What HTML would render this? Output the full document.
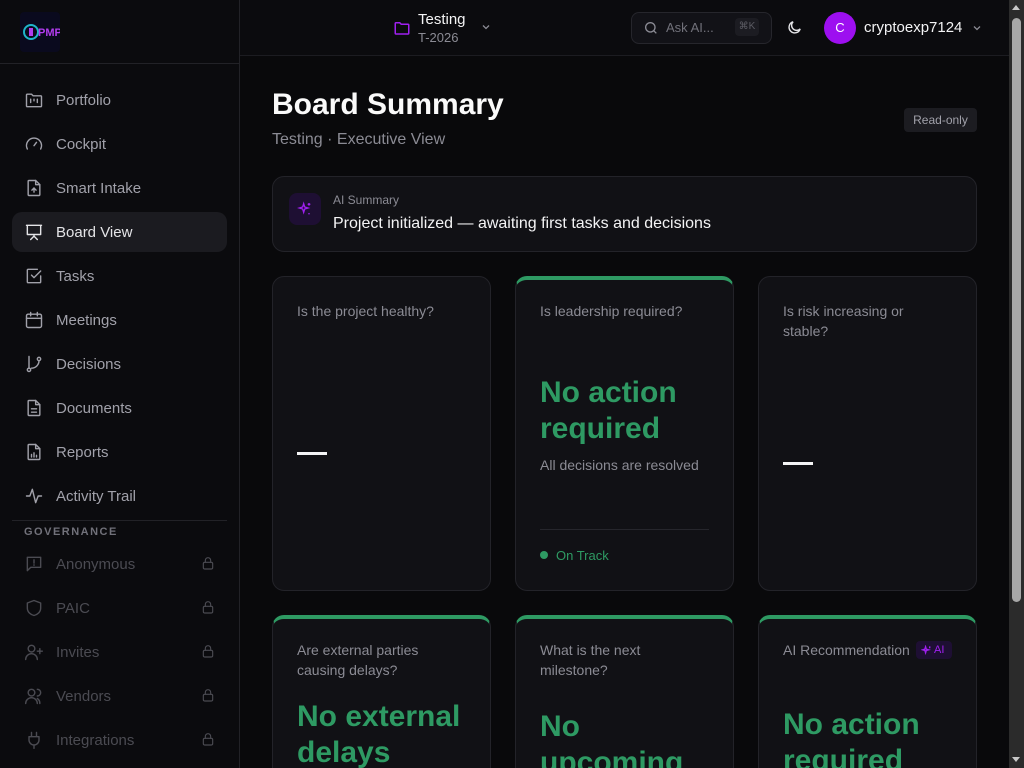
<!DOCTYPE html>
<html><head><meta charset="utf-8"><style>
*{box-sizing:border-box;margin:0;padding:0}
html,body{width:1024px;height:768px;overflow:hidden}
body{background:#09090b;font-family:"Liberation Sans",sans-serif;color:#e4e4e7;position:relative}
.side{position:absolute;left:0;top:0;width:240px;height:768px;background:#0b0b0e;border-right:1px solid #222227}
.logo{position:absolute;left:20px;top:12px;width:40px;height:40px;background:#0a0a1e;border-radius:4px}
.sep{position:absolute;left:0;top:63px;width:240px;height:1px;background:#222227}
.nav{position:absolute;left:12px;width:215px;height:40px;border-radius:10px;display:flex;align-items:center;padding-left:12px;font-size:15px;color:#a1a1aa}
.nav svg{width:20px;height:20px;margin-right:12px;stroke:#a1a1aa;fill:none;stroke-width:1.7;stroke-linecap:round;stroke-linejoin:round}
.nav.act{background:#1b1b20;color:#e4e4e7}
.nav.act svg{stroke:#e4e4e7}
.nav.dis{color:#4b4b52}
.nav.dis svg{stroke:#4b4b52}
.nav svg.lock{position:absolute;right:11px;top:11px;width:16px;height:16px;margin:0}
.gov{position:absolute;left:24px;top:526px;font-size:11px;letter-spacing:1.5px;color:#71717a;font-weight:bold}
.hdr{position:absolute;left:240px;top:0;width:770px;height:56px;border-bottom:1px solid #1c1c21;background:#0b0b0e}
.card{position:absolute;background:#111115;border:1px solid #232329;border-radius:12px;overflow:hidden}
.card.g{border-top:4px solid #2e9a63}
.bot{height:153px;border-bottom:0;border-bottom-left-radius:0;border-bottom-right-radius:0}
.q{position:absolute;left:24px;right:36px;font-size:14px;line-height:20px;color:#8b8b94}
.big{position:absolute;left:24px;right:16px;font-size:30px;line-height:36px;color:#2e9a63;font-weight:bold}
</style></head><body>
<div class="side">
<div class="logo"><svg width="40" height="40"><circle cx="11" cy="20" r="7" fill="none" stroke="#1fb5c9" stroke-width="2"/><rect x="9" y="16" width="4" height="8" fill="#b23cf0"/><text x="18" y="24" font-size="11" font-weight="bold" fill="#b23cf0" font-family="Liberation Sans">PMP</text></svg></div>
<div class="sep"></div>
<div class="nav" style="top:80px"><svg viewBox="0 0 24 24"><path d="M3 6a1 1 0 0 1 1-1h5l2 2h9a1 1 0 0 1 1 1v11a1 1 0 0 1-1 1H4a1 1 0 0 1-1-1z"/><path d="M8 11v4M12 11v2M16 11v4"/></svg>Portfolio</div>
<div class="nav" style="top:124px"><svg viewBox="0 0 24 24"><path d="M4 18a9 9 0 1 1 16 0"/><path d="M12 14l3-4"/></svg>Cockpit</div>
<div class="nav" style="top:168px"><svg viewBox="0 0 24 24"><path d="M14 3H6a1 1 0 0 0-1 1v16a1 1 0 0 0 1 1h12a1 1 0 0 0 1-1V8z"/><path d="M14 3v5h5M12 17v-5M9.5 14.5 12 12l2.5 2.5"/></svg>Smart Intake</div>
<div class="nav act" style="top:212px"><svg viewBox="0 0 24 24"><path d="M3 4h18M4 4v11h16V4M12 15v2M8 21l4-4 4 4"/></svg>Board View</div>
<div class="nav" style="top:256px"><svg viewBox="0 0 24 24"><path d="M20 12v7a1 1 0 0 1-1 1H5a1 1 0 0 1-1-1V5a1 1 0 0 1 1-1h11"/><path d="M9 11l3 3 8-8"/></svg>Tasks</div>
<div class="nav" style="top:300px"><svg viewBox="0 0 24 24"><rect x="3" y="5" width="18" height="16" rx="2"/><path d="M3 10h18M8 3v4M16 3v4"/></svg>Meetings</div>
<div class="nav" style="top:344px"><svg viewBox="0 0 24 24"><circle cx="6" cy="19" r="2"/><circle cx="18" cy="6" r="2"/><path d="M6 3v14M18 8a9 9 0 0 1-9 9"/></svg>Decisions</div>
<div class="nav" style="top:388px"><svg viewBox="0 0 24 24"><path d="M14 3H6a1 1 0 0 0-1 1v16a1 1 0 0 0 1 1h12a1 1 0 0 0 1-1V8z"/><path d="M14 3v5h5M9 13h6M9 17h6"/></svg>Documents</div>
<div class="nav" style="top:432px"><svg viewBox="0 0 24 24"><path d="M14 3H6a1 1 0 0 0-1 1v16a1 1 0 0 0 1 1h12a1 1 0 0 0 1-1V8z"/><path d="M14 3v5h5M9 18v-3M12 18v-5M15 18v-2"/></svg>Reports</div>
<div class="nav" style="top:476px"><svg viewBox="0 0 24 24"><path d="M3 12h4l3-8 4 16 3-8h4"/></svg>Activity Trail</div>
<div style="position:absolute;left:12px;top:520px;width:215px;height:1px;background:#222227"></div>
<div class="gov">GOVERNANCE</div>
<div class="nav dis" style="top:544px"><svg viewBox="0 0 24 24"><path d="M4 4h16v12H8l-4 4z"/><path d="M12 7v4M12 13v.5"/></svg>Anonymous<svg class="lock" viewBox="0 0 24 24"><rect x="5" y="11" width="14" height="10" rx="2"/><path d="M8 11V8a4 4 0 0 1 8 0v3"/></svg></div>
<div class="nav dis" style="top:588px"><svg viewBox="0 0 24 24"><path d="M12 3l8 3v6c0 5-4 8-8 9-4-1-8-4-8-9V6z"/></svg>PAIC<svg class="lock" viewBox="0 0 24 24"><rect x="5" y="11" width="14" height="10" rx="2"/><path d="M8 11V8a4 4 0 0 1 8 0v3"/></svg></div>
<div class="nav dis" style="top:632px"><svg viewBox="0 0 24 24"><circle cx="9" cy="8" r="4"/><path d="M2 21a7 7 0 0 1 14 0M19 8v6M16 11h6"/></svg>Invites<svg class="lock" viewBox="0 0 24 24"><rect x="5" y="11" width="14" height="10" rx="2"/><path d="M8 11V8a4 4 0 0 1 8 0v3"/></svg></div>
<div class="nav dis" style="top:676px"><svg viewBox="0 0 24 24"><circle cx="9" cy="8" r="4"/><path d="M2 21a7 7 0 0 1 14 0M16 4a4 4 0 0 1 0 8M19 21a7 7 0 0 0-3-6"/></svg>Vendors<svg class="lock" viewBox="0 0 24 24"><rect x="5" y="11" width="14" height="10" rx="2"/><path d="M8 11V8a4 4 0 0 1 8 0v3"/></svg></div>
<div class="nav dis" style="top:720px"><svg viewBox="0 0 24 24"><path d="M9 3v5M15 3v5M6 8h12v4a6 6 0 0 1-12 0zM12 18v4"/></svg>Integrations<svg class="lock" viewBox="0 0 24 24"><rect x="5" y="11" width="14" height="10" rx="2"/><path d="M8 11V8a4 4 0 0 1 8 0v3"/></svg></div>
</div>

<div class="hdr">
<svg style="position:absolute;left:153px;top:19px" width="18" height="18" viewBox="0 0 24 24" fill="none" stroke="#a020f0" stroke-width="2"><path d="M3 6a1 1 0 0 1 1-1h5l2 2h9a1 1 0 0 1 1 1v11a1 1 0 0 1-1 1H4a1 1 0 0 1-1-1z"/></svg>
<div style="position:absolute;left:178px;top:11px;font-size:15px;color:#f4f4f5">Testing</div>
<div style="position:absolute;left:178px;top:30px;font-size:13px;color:#8b8b94">T-2026</div>
<svg style="position:absolute;left:240px;top:21px" width="12" height="12" viewBox="0 0 24 24" fill="none" stroke="#8b8b94" stroke-width="2.5"><path d="M6 9l6 6 6-6"/></svg>
<div style="position:absolute;left:391px;top:12px;width:141px;height:32px;border:1px solid #26262c;border-radius:8px;background:#121217"></div>
<svg style="position:absolute;left:403px;top:20px" width="16" height="16" viewBox="0 0 24 24" fill="none" stroke="#8b8b94" stroke-width="2"><circle cx="11" cy="11" r="7"/><path d="M20 20l-4-4"/></svg>
<div style="position:absolute;left:426px;top:20px;font-size:13px;color:#71717a">Ask AI...</div>
<div style="position:absolute;left:495px;top:18px;width:24px;height:18px;background:#1c1c22;border-radius:4px;font-size:10px;color:#5c5c64;text-align:center;line-height:18px">⌘K</div>
<svg style="position:absolute;left:546px;top:19px" width="17" height="17" viewBox="0 0 24 24" fill="none" stroke="#e4e4e7" stroke-width="2"><path d="M20 14A8 8 0 1 1 10 4a7 7 0 0 0 10 10z"/></svg>
<div style="position:absolute;left:584px;top:12px;width:32px;height:32px;border-radius:50%;background:#9d0ff0;color:#fff;font-size:13px;text-align:center;line-height:32px">C</div>
<div style="position:absolute;left:624px;top:19px;font-size:15px;color:#f4f4f5">cryptoexp7124</div>
<svg style="position:absolute;left:731px;top:22px" width="12" height="12" viewBox="0 0 24 24" fill="none" stroke="#8b8b94" stroke-width="2.5"><path d="M6 9l6 6 6-6"/></svg>
</div>

<div style="position:absolute;left:1009px;top:0;width:15px;height:768px;background:#2b2b2b"></div>
<div style="position:absolute;left:1012px;top:18px;width:9px;height:584px;background:#a8a8a8;border-radius:5px"></div>
<div style="position:absolute;left:1012px;top:5px;width:0;height:0;border-left:4.5px solid transparent;border-right:4.5px solid transparent;border-bottom:5px solid #c8c8c8"></div>
<div style="position:absolute;left:1012px;top:757px;width:0;height:0;border-left:4.5px solid transparent;border-right:4.5px solid transparent;border-top:5px solid #c8c8c8"></div>

<div style="position:absolute;left:272px;top:88px;font-size:30px;font-weight:bold;color:#fafafa">Board Summary</div>
<div style="position:absolute;left:272px;top:131px;font-size:16px;color:#8b8b94">Testing · Executive View</div>
<div style="position:absolute;left:904px;top:108px;width:73px;height:24px;background:#1c1c21;border-radius:4px;font-size:12px;color:#a1a1aa;text-align:center;line-height:24px">Read-only</div>

<div class="card" style="left:272px;top:176px;width:705px;height:76px">
<div style="position:absolute;left:16px;top:16px;width:32px;height:32px;border-radius:8px;background:#1e0f33"></div>
<svg style="position:absolute;left:24px;top:24px" width="16" height="16" viewBox="0 0 24 24" fill="none" stroke="#a020f0" stroke-width="2"><path d="M10 4l1.5 5 5 1.5-5 1.5L10 17l-1.5-5L3.5 10.5l5-1.5zM18 3v4M16 5h4M18 18v2"/></svg>
<div style="position:absolute;left:60px;top:16px;font-size:12px;color:#8b8b94">AI Summary</div>
<div style="position:absolute;left:60px;top:38px;font-size:16px;color:#f4f4f5">Project initialized — awaiting first tasks and decisions</div>
</div>

<div class="card" style="left:272px;top:276px;width:219px;height:315px">
<div class="q" style="top:24px">Is the project healthy?</div>
<div style="position:absolute;left:24px;top:175px;width:30px;height:3px;background:#f4f4f5"></div>
</div>
<div class="card g" style="left:515px;top:276px;width:219px;height:315px">
<div class="q" style="top:21px">Is leadership required?</div>
<div class="big" style="top:95px">No action required</div>
<div style="position:absolute;left:24px;top:177px;font-size:14px;color:#8b8b94">All decisions are resolved</div>
<div style="position:absolute;left:24px;top:249px;width:169px;height:1px;background:#26262c"></div>
<div style="position:absolute;left:24px;top:271px;width:8px;height:8px;border-radius:50%;background:#2e9a63"></div>
<div style="position:absolute;left:40px;top:268px;font-size:13px;color:#2e9a63">On Track</div>
</div>
<div class="card" style="left:758px;top:276px;width:219px;height:315px">
<div class="q" style="top:24px">Is risk increasing or stable?</div>
<div style="position:absolute;left:24px;top:185px;width:30px;height:3px;background:#f4f4f5"></div>
</div>

<div class="card g bot" style="left:272px;top:615px;width:219px">
<div class="q" style="top:21px">Are external parties causing delays?</div>
<div class="big" style="top:80px">No external delays</div>
</div>
<div class="card g bot" style="left:515px;top:615px;width:219px">
<div class="q" style="top:21px">What is the next milestone?</div>
<div class="big" style="top:90px;right:60px">No upcoming</div>
</div>
<div class="card g bot" style="left:758px;top:615px;width:219px">
<div class="q" style="top:21px">AI Recommendation</div>
<div style="position:absolute;left:157px;top:22px;width:36px;height:18px;background:#1e0f33;border-radius:4px;font-size:11px;color:#a020f0;line-height:18px;padding-left:18px">AI</div>
<svg style="position:absolute;left:162px;top:26px" width="11" height="11" viewBox="0 0 24 24" fill="none" stroke="#a020f0" stroke-width="3"><path d="M10 4l1.5 5 5 1.5-5 1.5L10 17l-1.5-5L3.5 10.5l5-1.5zM19 3v4"/></svg>
<div class="big" style="top:88px">No action required</div>
</div>
</body></html>
